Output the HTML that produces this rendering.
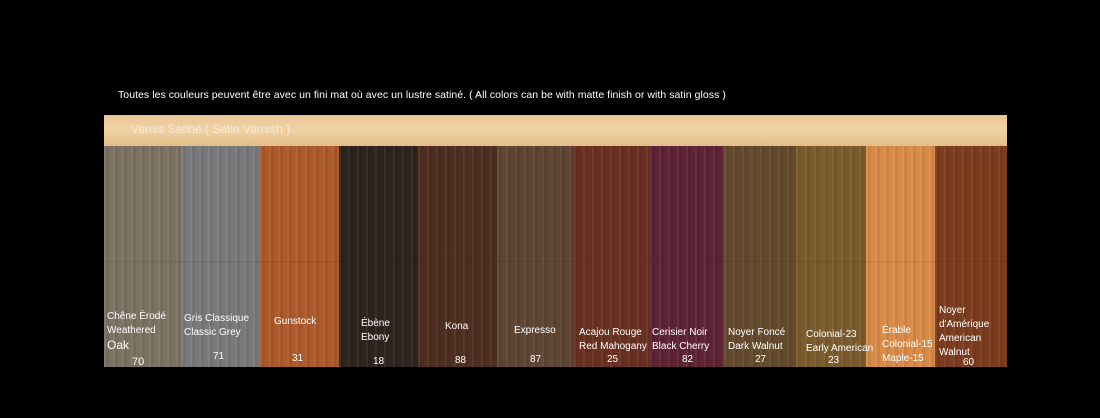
<!DOCTYPE html>
<html><head><meta charset="utf-8"><style>
body{margin:0;width:1100px;height:418px;background:#000;position:relative;overflow:hidden;font-family:"Liberation Sans",sans-serif;}
.top{position:absolute;left:118px;top:89px;color:#fff;font-size:10.5px;letter-spacing:0.05px;}
.band{position:absolute;left:104px;top:115px;width:903px;height:31px;background:linear-gradient(180deg,#e9c596,#f0d3a6 50%,#e4bd88);}
.band span{position:absolute;left:27px;top:7px;color:#f7ead6;font-size:12px;}
.sw{position:absolute;top:146px;height:221px;}
.sw::after{content:"";position:absolute;left:0;right:0;top:0;bottom:0;background:repeating-linear-gradient(90deg,rgba(255,255,255,.05) 0 2px,rgba(0,0,0,.06) 2px 5px,rgba(255,255,255,0) 5px 9px);}
.sw::before{content:"";position:absolute;left:0;right:0;top:115px;height:1px;background:rgba(0,0,0,.08);}
.t{position:absolute;color:#fff;font-size:10px;line-height:14px;z-index:2;white-space:nowrap;}
</style></head><body>
<div class="top">Toutes les couleurs peuvent être avec un fini mat où avec un lustre satiné. ( All colors can be with matte finish or with satin gloss )</div>
<div class="band"><span>Vernis Satiné ( Satin Varnish )</span></div>
<div class="sw" style="left:104px;width:77px;background:#7c7262"></div>
<div class="sw" style="left:181px;width:79px;background:#79787a"></div>
<div class="sw" style="left:260px;width:79px;background:#ad5a2c"></div>
<div class="sw" style="left:339px;width:79px;background:#2e231d"></div>
<div class="sw" style="left:418px;width:79px;background:#4e2e20"></div>
<div class="sw" style="left:497px;width:77px;background:#5e4534"></div>
<div class="sw" style="left:574px;width:76px;background:#693021"></div>
<div class="sw" style="left:650px;width:74px;background:#5e2334"></div>
<div class="sw" style="left:724px;width:72px;background:#644a2c"></div>
<div class="sw" style="left:796px;width:70px;background:#7a5b2c"></div>
<div class="sw" style="left:866px;width:69px;background:#d88b48"></div>
<div class="sw" style="left:935px;width:72px;background:#7b3c1f"></div>

<div class="t" style="left:107px;top:310px">Chêne Érodé<br>Weathered<br><span style="font-size:12px">Oak</span></div>
<div class="t" style="left:132px;top:355px;font-size:11px">70</div>
<div class="t" style="left:184px;top:312px">Gris Classique<br>Classic Grey</div>
<div class="t" style="left:213px;top:350px">71</div>
<div class="t" style="left:274px;top:315px">Gunstock</div>
<div class="t" style="left:292px;top:352px">31</div>
<div class="t" style="left:361px;top:317px">Ébène<br>Ebony</div>
<div class="t" style="left:373px;top:355px">18</div>
<div class="t" style="left:445px;top:320px">Kona</div>
<div class="t" style="left:455px;top:354px">88</div>
<div class="t" style="left:514px;top:324px">Expresso</div>
<div class="t" style="left:530px;top:353px">87</div>
<div class="t" style="left:579px;top:326px">Acajou Rouge<br>Red Mahogany</div>
<div class="t" style="left:607px;top:353px">25</div>
<div class="t" style="left:652px;top:326px">Cerisier Noir<br>Black Cherry</div>
<div class="t" style="left:682px;top:353px">82</div>
<div class="t" style="left:728px;top:326px">Noyer Foncé<br>Dark Walnut</div>
<div class="t" style="left:755px;top:353px">27</div>
<div class="t" style="left:806px;top:328px">Colonial-23<br>Early American</div>
<div class="t" style="left:828px;top:354px">23</div>
<div class="t" style="left:882px;top:324px">Érable<br>Colonial-15<br>Maple-15</div>
<div class="t" style="left:939px;top:304px">Noyer<br>d'Amérique<br>American<br>Walnut</div>
<div class="t" style="left:963px;top:356px">60</div>
</body></html>
